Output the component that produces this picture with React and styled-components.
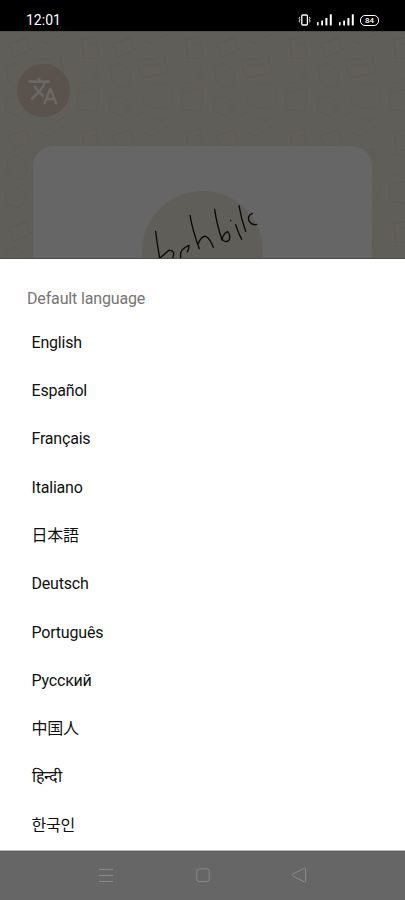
import React from 'react';
import styled, { createGlobalStyle } from 'styled-components';

const languages = [
    'English',
    'Español',
    'Français',
    'Italiano',
    '日本語',
    'Deutsch',
    'Português',
    'Русский',
    '中国人',
    'हिन्दी',
    '한국인',
];

const VibrateIcon = () => (
    <svg width="13" height="12" viewBox="0 0 13 12" fill="none" stroke="#fff">
        <rect x="3.8" y="1" width="5.6" height="10" rx="1" strokeWidth="1.3" />
        <path d="M2 3l-1 1.3 1 1.4-1 1.4 1 1.4M11.2 3l1 1.3-1 1.4 1 1.4-1 1.4" strokeWidth="0.9" />
    </svg>
);

const SignalIcon = () => (
    <svg width="15" height="12" viewBox="0 0 15 12" fill="#fff">
        <rect x="0" y="8" width="1.6" height="3.4" rx="0.4" />
        <rect x="4.2" y="6.5" width="1.8" height="4.9" rx="0.4" />
        <rect x="8.4" y="4" width="2" height="7.4" rx="0.4" />
        <rect x="12.8" y="0.3" width="2" height="11.1" rx="0.4" />
    </svg>
);

const TranslateIcon = () => (
    <svg width="32" height="32" viewBox="0 0 24 24" fill="#6a6865">
        <path d="M12.87 15.07l-2.54-2.51.03-.03c1.74-1.94 2.98-4.17 3.71-6.53H17V4h-7V2H8v2H1v1.99h11.17C11.5 7.92 10.44 9.75 9 11.35 8.07 10.32 7.3 9.19 6.69 8h-2c.73 1.63 1.73 3.17 2.98 4.56l-5.09 5.02L4 19l5-5 3.11 3.11.76-2.04zM18.5 10h-2L12 22h2l1.12-3h4.75L21 22h2l-4.5-12zm-2.62 7l1.62-4.33L19.12 17h-3.24z" />
    </svg>
);

const Doodles = () => (
    <DoodleLayer width="405" height="228" fill="none" stroke="#57524c" strokeOpacity="0.4">
        <defs>
            <pattern id="doodle" width="104" height="92" patternUnits="userSpaceOnUse">
                <path d="M8 12l18-6 5 12-17 7zM37 5q8 12 18 2t18 3M82 8l14-3 3 20-15 2zM86 13l10-2M7 37q9-11 17 0t-3 18q-15 2-14-18M33 29l27-4 4 16-26 5zM38 34l20-3M76 37q4-11 15-6t4 14-14 5M44 57q8-10 19-3t3 17-21 3-1-17M77 61l23-5-4 24-18-3zM5 69l10-6 12 8-7 13-14-4zM31 86q7-9 16-1t20-2" />
            </pattern>
        </defs>
        <rect width="405" height="228" fill="url(#doodle)" stroke="none" />
    </DoodleLayer>
);

const Scribble = () => (
    <svg width="145" height="90" viewBox="0 183 435 270" fill="none" stroke="#090909" strokeWidth="4" strokeLinecap="round" strokeLinejoin="round">
        <path d="M77 304L82 342 90 390M90 384L117 361Q132 360 131 374L126 390" />
        <path d="M154 390Q148 370 157 359 165 351 177 346 177 357 172 366M195 385v1" />
        <path d="M180 256Q188 303 208 356M204 342Q215 317 227 319 240 325 250 352" />
        <path d="M254 238Q260 282 276 330M276 328Q281 309 293 305 303 317 297 330 288 341 277 328" />
        <path d="M302 271v1M317 284Q324 308 335 328" />
        <path d="M327 227Q334 269 347 304M367 250Q350 258 358 274 367 287 380 283" />
    </svg>
);

const App = () => (
    <Screen>
        <GlobalStyle />
        <StatusBar>
            <Clock>12:01</Clock>
            <StatusIcons>
                <VibrateIcon />
                <SignalIcon />
                <SignalIcon />
                <Battery>84</Battery>
            </StatusIcons>
        </StatusBar>
        <Backdrop>
            <Doodles />
            <LanguageButton>
                <TranslateIcon />
            </LanguageButton>
            <Card>
                <Avatar>
                    <Scribble />
                </Avatar>
            </Card>
        </Backdrop>
        <Sheet>
            <Title>Default language</Title>
            <List>
                {languages.map((name) => (
                    <Language key={name}>{name}</Language>
                ))}
            </List>
        </Sheet>
        <NavBar>
            <svg width="16" height="16" viewBox="0 0 16 16" fill="none" stroke="#8a8a8a">
                <path d="M1 2.5h14M1 8.5h14M1 14.5h14" />
            </svg>
            <svg width="16" height="16" viewBox="0 0 16 16" fill="none" stroke="#8a8a8a">
                <rect x="1.7" y="1.9" width="12.6" height="12.6" rx="2.5" />
            </svg>
            <svg width="16" height="16" viewBox="0 0 16 16" fill="none" stroke="#8a8a8a" strokeLinejoin="round">
                <path d="M1.5 7.3L13.4 1.2Q14.5 1 14.5 2v12.3q0 1-1.2.7L1.5 8.7q-.8-.7 0-1.4z" />
            </svg>
        </NavBar>
    </Screen>
);

export default App;

const GlobalStyle = createGlobalStyle`
    body {
        margin: 0;
        background: #666;
    }
    * {
        box-sizing: border-box;
    }
    svg {
        display: block;
        flex: none;
    }
`;

const Screen = styled.div`
    display: flex;
    flex-direction: column;
    width: 405px;
    height: 900px;
    overflow: hidden;
    font-family: Roboto, "Noto Sans CJK JP", "Noto Sans CJK KR", sans-serif;
`;

//Status bar
const StatusBar = styled.header`
    display: flex;
    justify-content: space-between;
    flex: none;
    height: 31px;
    padding: 0 26px;
    background: #000;
    color: #fff;
`;

const Clock = styled.span`
    padding-top: 11px;
    font-size: 14px;
    line-height: 18px;
`;

const StatusIcons = styled.div`
    display: flex;
    align-items: center;
    gap: 6.5px;
    padding-top: 9px;
`;

const Battery = styled.span`
    width: 19px;
    height: 11px;
    border: 1px solid #fff;
    border-radius: 5px;
    font-size: 8px;
    font-weight: 500;
    line-height: 9px;
    text-align: center;
`;

//Dimmed page
const Backdrop = styled.div`
    position: relative;
    flex: none;
    height: 228px;
    overflow: hidden;
    border-top: 1px solid #53524d;
    border-bottom: 1px solid #4b4a48;
    background: #605e59;
`;

const DoodleLayer = styled.svg`
    position: absolute;
    inset: 0;
`;

const LanguageButton = styled.div`
    position: relative;
    display: flex;
    align-items: center;
    justify-content: center;
    width: 53px;
    height: 53px;
    margin: 32px 0 0 16.5px;
    border-radius: 50%;
    background: #5a534d;
`;

const Card = styled.div`
    position: relative;
    display: flex;
    justify-content: center;
    width: 339px;
    height: 240px;
    margin: 29px auto 0;
    padding-top: 45px;
    border-radius: 20px;
    background: #666;
`;

const Avatar = styled.div`
    display: flex;
    justify-content: center;
    width: 121px;
    height: 121px;
    border-radius: 50%;
    background: #605e58;
`;

//Language sheet
const Sheet = styled.section`
    flex: none;
    height: 592px;
    padding-top: 28.6px;
    border-bottom: 1px solid #b9bcb9;
    background: #fff;
`;

const Title = styled.h1`
    margin: 0 0 0 27px;
    color: #757575;
    font-size: 16px;
    font-weight: 400;
    letter-spacing: -0.15px;
    line-height: 22px;
`;

const List = styled.ul`
    margin: 9px 0 0;
    padding: 0 0 0 31.5px;
    list-style-type: none;
`;

const Language = styled.li`
    display: flex;
    align-items: center;
    height: 48.3px;
    color: #111;
    font-size: 16px;
    letter-spacing: -0.2px;
    line-height: 22px;
`;

//Android navigation
const NavBar = styled.nav`
    display: flex;
    justify-content: center;
    gap: 80.5px;
    flex: 1;
    padding-top: 15px;
    border-top: 1px solid #5c5c5c;
    background: #666;
`;
